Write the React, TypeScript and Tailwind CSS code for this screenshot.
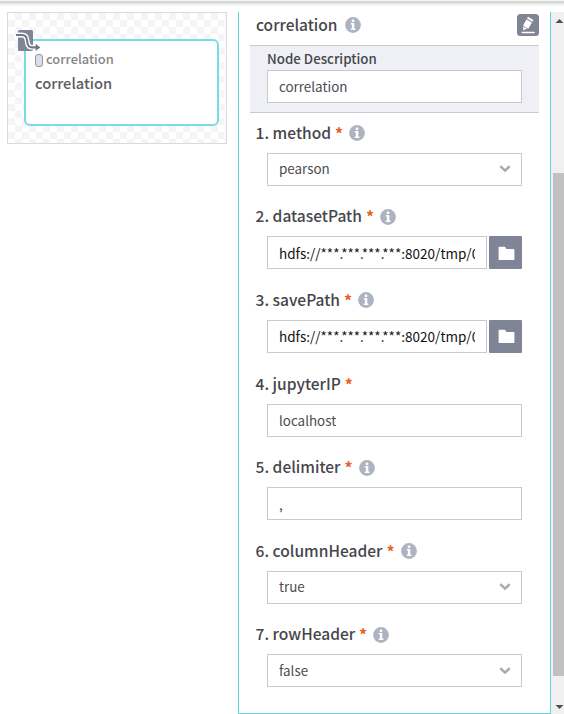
import React from "react";

type FieldKind = "select" | "path" | "text";

interface Field {
  label: string;
  kind: FieldKind;
  value: string;
  info: boolean;
}

const HDFS = "hdfs://***.***.***.***:8020/tmp/0";

const fields: Field[] = [
  { label: "1. method", kind: "select", value: "pearson", info: true },
  { label: "2. datasetPath", kind: "path", value: HDFS, info: true },
  { label: "3. savePath", kind: "path", value: HDFS, info: true },
  { label: "4. jupyterIP", kind: "text", value: "localhost", info: false },
  { label: "5. delimiter", kind: "text", value: ",", info: true },
  { label: "6. columnHeader", kind: "select", value: "true", info: true },
  { label: "7. rowHeader", kind: "select", value: "false", info: true },
];

function InfoIcon() {
  return (
    <svg width="16" height="16" viewBox="0 0 16 16" className="shrink-0">
      <circle cx="8" cy="8" r="7.9" fill="#aeb3c1" />
      <rect x="6.7" y="2.4" width="2.6" height="2.5" rx="0.6" fill="#fff" />
      <path d="M5.8 6.1h3.5v5.3h1.1v1.6H5.8v-1.6h1.1V7.6H5.8z" fill="#fff" />
    </svg>
  );
}

function Chevron() {
  return (
    <svg width="12" height="8" viewBox="0 0 12 8" className="shrink-0">
      <path d="M1.3 1.2 6 5.6l4.7-4.4" fill="none" stroke="#aaaaab" strokeWidth="2.5" />
    </svg>
  );
}

function FolderButton() {
  return (
    <button className="flex h-[33px] w-[33px] shrink-0 items-center justify-center rounded-[1px] bg-[#7f8496] pl-px pt-px">
      <svg width="17" height="15" viewBox="0 0 17 15">
        <path d="M.6 1.4q0-.7.7-.7h5.3q.5 0 .8.5l1 1.7h7.3q.7 0 .7.7v9.8q0 .7-.7.7H1.3q-.7 0-.7-.7z" fill="#fff" />
      </svg>
    </button>
  );
}

function EditIcon() {
  return (
    <svg width="22" height="22" viewBox="0 0 22 22" className="shrink-0">
      <rect width="22" height="22" rx="3.5" fill="#7f8496" />
      <g fill="#fff">
        <path d="m11 2.8 5.4 3.1-1 1.8L10 4.6z" />
        <path d="m9.5 5.4 5.4 3.1-3.4 6-1.6-.3-.8-1-1.3-.1-1.6-1.9z" />
        <path d="m6 12.3.3 4 3.6-1.5-.8-1-1.3-.1z" />
        <rect x="4.6" y="17.8" width="13.2" height="1.5" rx=".7" />
      </g>
    </svg>
  );
}

function NodeIcon() {
  return (
    <svg width="26" height="24" viewBox="0 0 26 24" className="absolute -left-[10px] -top-[12px]">
      <rect x="2" y="1" width="15" height="21" rx="1.5" fill="#7f8496" />
      <path
        d="M0 6h5.5c3.6 0 5 1.4 5.4 4.4l.6 3.8c.5 2.9 1.6 4.2 4.4 4.2h5"
        fill="none"
        stroke="#fff"
        strokeWidth="4.8"
      />
      <path
        d="M0 6h5.5c3.6 0 5 1.4 5.4 4.4l.6 3.8c.5 2.9 1.6 4.2 4.4 4.2h5"
        fill="none"
        stroke="#737889"
        strokeWidth="2.1"
      />
      <path d="m19.6 14.8 4.8 3.6-4.8 3.6z" fill="#737889" />
    </svg>
  );
}

function FieldRow({ field }: { field: Field }) {
  return (
    <div className="h-[83.6px]">
      <div className="flex h-[33px] items-start pl-[5.6px]">
        <span className="h-[26px] whitespace-pre text-[15.55px] font-medium leading-[25.4px]">{field.label}</span>
        <span className="ml-[4px] mr-[6px] text-[16px] font-bold leading-[27px] text-[#eb5f22]">*</span>
        {field.info && (
          <div className="pt-[5.5px]">
            <InfoIcon />
          </div>
        )}
      </div>
      <div className="mx-[17px] flex gap-[2px]">
        <div
          className={`flex h-[33px] min-w-0 flex-1 items-center justify-between border border-[#c9c9ca] bg-white pl-[11px] ${
            field.kind === "path" ? "pr-[11px] text-[13.5px] text-[#111111]" : "pr-[10px] text-[13.4px] text-[#4b4c51]"
          }`}
        >
          <span
            className={`min-w-0 overflow-hidden whitespace-nowrap ${
              field.kind === "select" ? "pb-px leading-[19px]" : "leading-[20px]"
            }`}
          >
            {field.value}
          </span>
          {field.kind === "select" && <Chevron />}
        </div>
        {field.kind === "path" && <FolderButton />}
      </div>
    </div>
  );
}

export default function App() {
  return (
    <div className="flex h-[714px] w-[564px] flex-col overflow-hidden bg-white font-['Noto_Sans_CJK_KR','Noto_Sans',sans-serif] text-[#45464c]">
      <div className="h-[12px] shrink-0 bg-[linear-gradient(to_bottom,#f4f6f4_0px,#f4f6f4_1px,#d5d7d5_1px,#d5d7d5_2px,#dcdedc_3px,#ebeceb_4px,#f6f6f6_5px,#fff_7px)]" />
      <div className="flex min-h-0 flex-1">
        <div className="w-[238px] pl-[7px]">
          <div className="h-[132px] w-[220px] border border-[#d9d9de] bg-[conic-gradient(#f5f5f7_25%,#fff_0_50%,#f5f5f7_0_75%,#fff_0)] bg-[length:14px_14px] pl-[16px] pt-[26px]">
            <div className="relative h-[87px] w-[195px] rounded-[6px] border-2 border-[#79dce2] bg-white pl-[9px] pt-[8px]">
              <NodeIcon />
              <div className="flex h-[20px] items-center gap-[3px]">
                <span className="mt-[3px] h-[13px] w-[8px] rounded-[3px] border border-[#8f94a6] bg-[#dddfe8]" />
                <span className="text-[12.9px] font-medium leading-[20px] text-[#858588]">correlation</span>
              </div>
              <div className="mt-[3px] text-[14.7px] font-medium leading-[22px] text-[#5c5d61]">correlation</div>
            </div>
          </div>
        </div>
        <div className="h-[702px] w-[313px] shrink-0 border-x border-b border-[#5ed3da] px-[11px]">
          <div className="flex h-[33px] items-start pl-[6px]">
            <span className="text-[15.5px] font-medium leading-[25px]">correlation</span>
            <div className="ml-[7px] mt-[5px]">
              <InfoIcon />
            </div>
            <div className="ml-auto mt-[2px]">
              <EditIcon />
            </div>
          </div>
          <div className="h-[68px] border-y border-[#cbcbcf] bg-[#eff0f5] px-[17px] pt-[4px]">
            <div className="h-[20px] text-[13.3px] font-medium leading-[18px]">Node Description</div>
            <div className="flex h-[33px] items-center border border-[#c9c9ca] bg-white pb-px pl-[11px] text-[13.4px] leading-[19px] text-[#4b4c51]">
              correlation
            </div>
          </div>
          <div className="pt-[6.8px]">
            {fields.map((f) => (
              <FieldRow key={f.label} field={f} />
            ))}
          </div>
        </div>
        <div className="flex h-full w-[13px] shrink-0 flex-col items-end bg-[#f0f0f0]">
          <svg width="11" height="161" viewBox="0 0 11 161">
            <path d="M2.5 11h8L6.5 7z" fill="#505050" />
          </svg>
          <div className="h-[503px] w-[11px] shrink-0 bg-[#c1c1c1]" />
          <svg width="11" height="38" viewBox="0 0 11 38">
            <path d="M2.5 29h8l-4 4z" fill="#505050" />
          </svg>
        </div>
      </div>
    </div>
  );
}
